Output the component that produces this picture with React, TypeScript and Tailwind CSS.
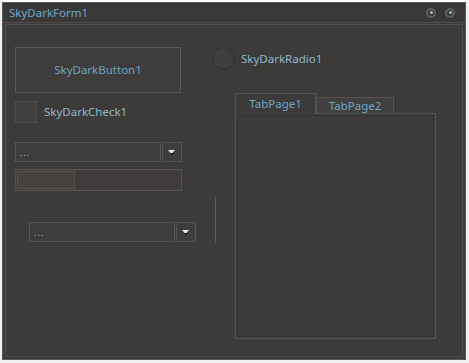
import React from "react";

const font = { fontFamily: '"Noto Sans", "Open Sans", sans-serif' };

const Combo = ({ className = "" }: { className?: string }) => (
  <div className={`flex h-[20px] w-[167px] ${className}`}>
    <div className="flex flex-1 items-center border border-[#555452] bg-[#3f3d3b] pl-[4px]">
      <span className="text-[9px] leading-none tracking-[1px] text-[#8ec6dc]">...</span>
    </div>
    <div className="ml-px flex w-[20px] items-center justify-center border border-[#555452] bg-[#3f3d3b]">
      <svg width="8" height="5" viewBox="0 0 8 5">
        <path d="M0 0h7l-3.5 4z" fill="#d8eef6" />
        <path d="M2 3h4l-1.5 2z" fill="#111" />
      </svg>
    </div>
  </div>
);

const TitleDot = () => (
  <div className="flex h-[10px] w-[10px] items-center justify-center rounded-full border-2 border-[#5e5e5e]">
    <div className="h-[3px] w-[3px] rounded-full bg-[#8fc1d6]" />
  </div>
);

export default function App() {
  return (
    <div className="h-[363px] w-[469px] bg-[#f0f0f0]" style={font}>
      <div className="ml-[2px] mt-[2px] flex h-[358px] w-[464px] flex-col border border-[#5a5957] bg-[#3d3b39]">
        {/* title bar */}
        <div className="flex h-[20px] items-center border-b border-[#4f4e4c] bg-[#3a3836] pl-[6px] pr-[10px]">
          <span className="text-[11.5px] text-[#6aa6cc]">SkyDarkForm1</span>
          <div className="ml-auto flex gap-[9px]">
            <TitleDot />
            <TitleDot />
          </div>
        </div>
        {/* body */}
        <div className="mx-[2px] mb-[2px] mt-px flex flex-1 border border-[#4f4e4c] bg-[#3d3b39]">
          {/* left column */}
          <div className="ml-[9px] flex w-[181px] flex-col">
            <button className="mt-[22px] flex h-[46px] w-[166px] items-center justify-center border border-[#5b5a58] bg-[#3f3d3b] text-[11.5px] text-[#68a4c2]">
              SkyDarkButton1
            </button>
            <div className="mt-[8px] flex items-center">
              <div className="h-[22px] w-[22px] border border-[#4f4e4c] bg-[#42403e]" />
              <span className="ml-[7px] text-[11.5px] text-[#8fb8cc]">SkyDarkCheck1</span>
            </div>
            <Combo className="mt-[19px]" />
            <div className="mt-[7px] flex h-[22px] w-[167px] border border-[#555452] bg-[#403c3b] p-[1px]">
              <div className="h-full w-[58px] border border-[#545251] bg-[#45423f]" />
            </div>
            <Combo className="ml-[14px] mt-[31px]" />
          </div>
          {/* divider */}
          <div className="ml-[19px] mt-[172px] h-[46px] w-px bg-[#605e5c]" />
          {/* right column */}
          <div className="ml-[-4px] flex flex-col">
            <div className="mt-[22px] flex items-center">
              <div className="h-[23px] w-[23px] rounded-full border border-[#2f2e2c] bg-[#403e3c]" />
              <span className="ml-[6px] text-[11.5px] text-[#8fb8cc]">SkyDarkRadio1</span>
            </div>
            <div className="ml-[23px] mt-[23px] flex flex-col">
              <div className="flex items-end">
                <div className="z-10 mb-[-1px] flex h-[21px] w-[81px] items-start justify-center border border-b-0 border-[#555452] bg-[#3d3b39] pt-[1px] text-[11.5px] text-[#6aa6cc]">
                  TabPage1
                </div>
                <div className="flex h-[16px] w-[78px] items-end justify-center border border-b-0 border-[#555452] bg-[#42403e] text-[11.5px] leading-[15px] text-[#6aa6cc]">
                  TabPage2
                </div>
              </div>
              <div className="h-[226px] w-[201px] border border-[#555452] p-px">
                <div className="h-full w-full border border-[#353432]" />
              </div>
            </div>
          </div>
        </div>
      </div>
    </div>
  );
}
